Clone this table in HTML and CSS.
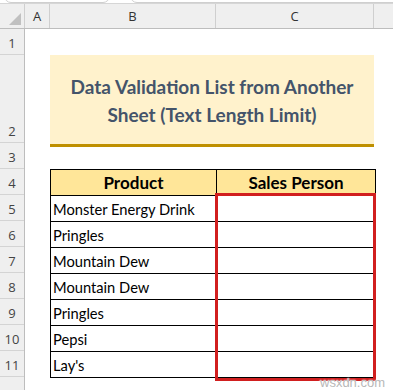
FILE: index.html
```html
<!DOCTYPE html>
<html>
<head>
<meta charset="utf-8">
<link rel="stylesheet" href="styles.css">
</head>
<body>
<div class="app">
  <div class="tabs">
    <div class="tab tab-one"></div>
    <div class="tab tab-two"></div>
  </div>
  <div class="colhdr">
    <div class="corner"><span class="tri"></span></div>
    <div class="ch">A</div>
    <div class="ch">B</div>
    <div class="ch">C</div>
    <div class="ch ch-last"></div>
  </div>
  <div class="body">
    <div class="rowhdrs">
      <div class="rh">1</div>
      <div class="rh rh-tall">2</div>
      <div class="rh">3</div>
      <div class="rh">4</div>
      <div class="rh">5</div>
      <div class="rh">6</div>
      <div class="rh">7</div>
      <div class="rh">8</div>
      <div class="rh">9</div>
      <div class="rh">10</div>
      <div class="rh">11</div>
      <div class="rh"></div>
    </div>
    <div class="title">Data Validation List from Another<br>Sheet (Text Length Limit)</div>
    <div class="tablewrap">
      <table class="data">
        <tr><th class="cb">Product</th><th class="cc">Sales Person</th></tr>
        <tr><td class="cb">Monster Energy Drink</td><td class="cc"></td></tr>
        <tr><td class="cb">Pringles</td><td class="cc"></td></tr>
        <tr><td class="cb">Mountain Dew</td><td class="cc"></td></tr>
        <tr><td class="cb">Mountain Dew</td><td class="cc"></td></tr>
        <tr><td class="cb">Pringles</td><td class="cc"></td></tr>
        <tr><td class="cb">Pepsi</td><td class="cc"></td></tr>
        <tr><td class="cb">Lay's</td><td class="cc"></td></tr>
      </table>
      <div class="redbox"></div>
    </div>
  </div>
  <div class="watermark">wsxdn.com</div>
</div>
</body>
</html>
```
FILE: styles.css
```css
html, body {
  margin: 0;
  padding: 0;
  background: #ffffff;
}
.app {
  position: relative;
  width: 393px;
  height: 390px;
  overflow: hidden;
  background: #ffffff;
  font-family: "Lato", "Liberation Sans", sans-serif;
}
.tabs {
  position: relative;
  height: 3px;
}
.tab {
  position: absolute;
  top: -12px;
  height: 13px;
  border: 1px solid #cfcfcf;
  border-radius: 0 0 7px 7px;
  background: #ffffff;
}
.tab-one { left: 4px; width: 104px; }
.tab-two { left: 130px; width: 290px; }
.colhdr {
  display: grid;
  grid-template-columns: 25px 25px 166px 158px 1fr;
  height: 26px;
  background: #efefef;
  border-top: 1px solid #d6d6d6;
  border-bottom: 1px solid #bdbdbd;
  box-sizing: border-box;
  font-family: "Open Sans", "Noto Sans", sans-serif;
  font-size: 13px;
  color: #333;
}
.corner {
  position: relative;
  border-right: 1px solid #cfcfcf;
}
.tri {
  position: absolute;
  right: 3px;
  bottom: 3px;
  width: 0;
  height: 0;
  border-left: 12px solid transparent;
  border-bottom: 12px solid #c0c0c0;
}
.ch {
  display: flex;
  align-items: center;
  justify-content: center;
  border-right: 1px solid #cfcfcf;
}
.ch-last { border-right: none; }
.body {
  display: grid;
  grid-template-columns: 25px 25px 166px 158px 1fr;
  grid-template-rows: 26px 88px repeat(10, 26px);
}
.rowhdrs {
  grid-column: 1;
  grid-row: 1 / -1;
  display: flex;
  flex-direction: column;
  background: #efefef;
  border-right: 1px solid #bdbdbd;
  font-family: "Open Sans", "Noto Sans", sans-serif;
  font-size: 13px;
  color: #444;
}
.rh {
  height: 26px;
  flex: none;
  box-sizing: border-box;
  border-bottom: 1px solid #d4d4d4;
  display: flex;
  align-items: flex-end;
  justify-content: center;
  padding-bottom: 2px;
  line-height: 18px;
}
.rh-tall { height: 88px; }
.title {
  grid-column: 3 / 5;
  grid-row: 2;
  height: 87px;
  box-sizing: content-box;
  background: #fff2cc;
  border-bottom: 3px solid #bf9000;
  display: flex;
  align-items: center;
  justify-content: center;
  text-align: center;
  padding-top: 2px;
  font-size: 19px;
  font-weight: 700;
  line-height: 28px;
  color: #44546a;
}
.tablewrap {
  grid-column: 3 / 6;
  grid-row: 4 / 12;
  position: relative;
}
.data {
  border-collapse: separate;
  border-spacing: 0;
  border-top: 1px solid #000;
  border-left: 1px solid #000;
  table-layout: fixed;
}
.data th, .data td {
  height: 26px;
  box-sizing: border-box;
  padding: 0 2px;
  border-right: 1px solid #000;
  border-bottom: 1px solid #000;
  white-space: nowrap;
  vertical-align: middle;
}
.data th {
  background: #ffe699;
  font-size: 17px;
  font-weight: 700;
  text-align: center;
  color: #000;
}
.data td {
  font-size: 14.7px;
  color: #000;
  text-align: left;
}
.cb { width: 166px; }
.cc { width: 159px; }
.redbox {
  position: absolute;
  left: 165px;
  top: 24px;
  width: 161px;
  height: 188px;
  box-sizing: border-box;
  border: 3px solid #d11f1f;
}
.watermark {
  position: absolute;
  left: 320px;
  top: 375px;
  font-family: "Liberation Sans", sans-serif;
  font-size: 13px;
  color: #b8b8b8;
  text-shadow: 0 0 2px #fff, 0 0 1px #fff;
}
```
